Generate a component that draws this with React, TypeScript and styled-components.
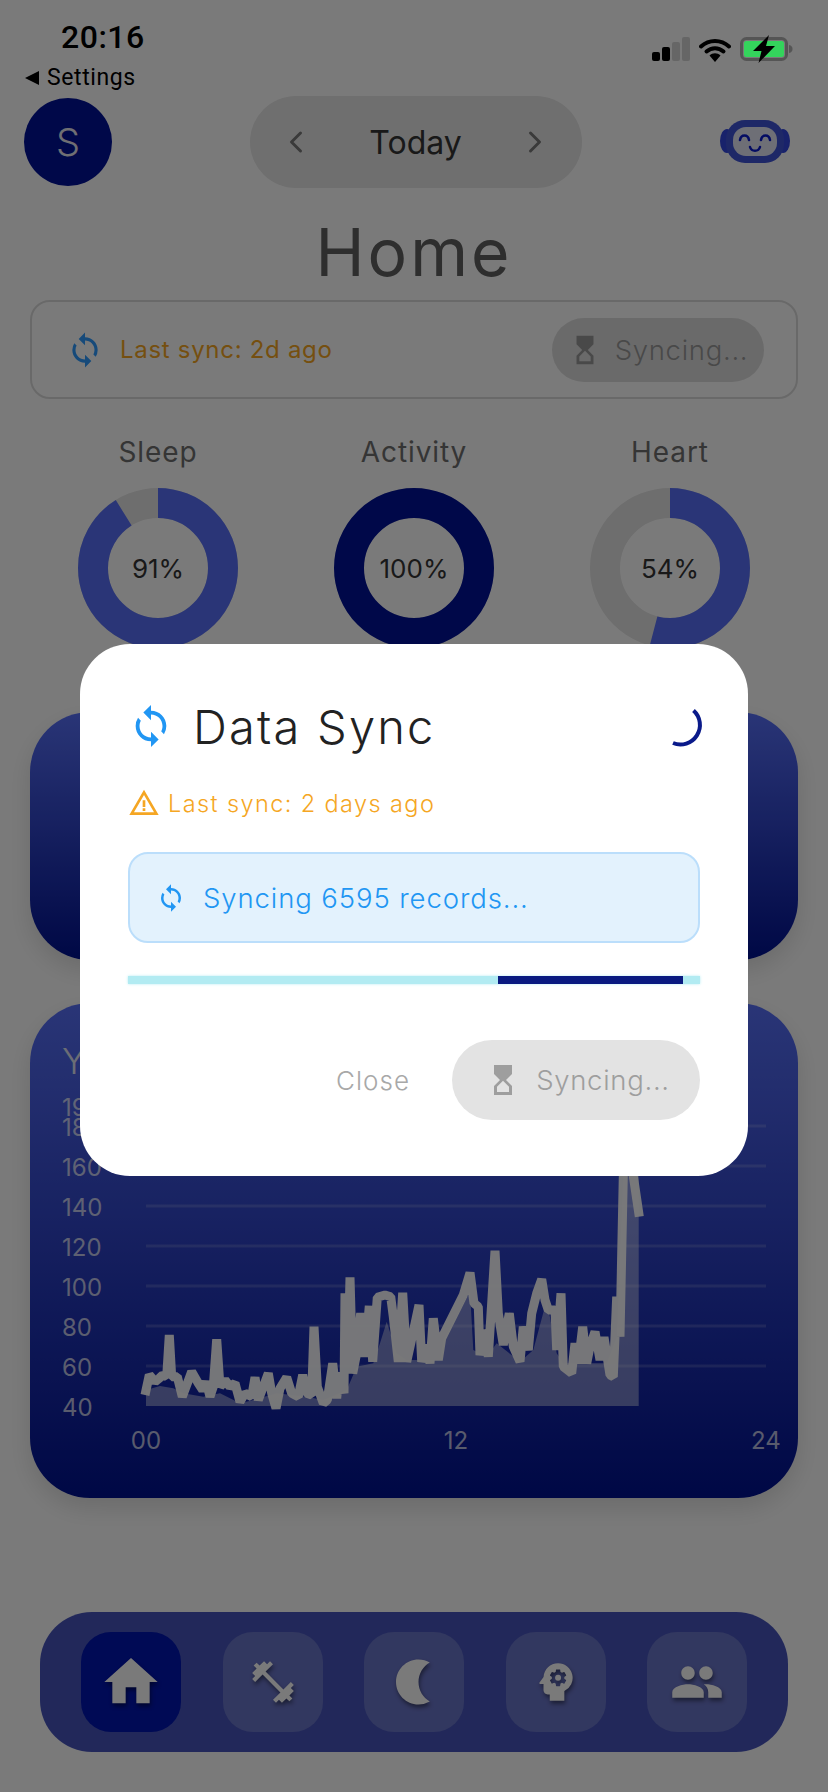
import React from 'react';
import styled, { createGlobalStyle } from 'styled-components';
import {
  MdFitnessCenter,
  MdGroup,
  MdHome,
  MdHourglassTop,
  MdNightlight,
  MdPsychology,
  MdSync,
  MdWarningAmber,
} from 'react-icons/md';
import { ChevronLeft, ChevronRight } from 'lucide-react';

const FONT = `Inter, "Open Sans", "Liberation Sans", sans-serif`;

const GlobalStyle = createGlobalStyle`
  html, body { margin: 0; padding: 0; background: #fff; }
  * { box-sizing: border-box; }
`;

const Screen = styled.div`
  position: relative;
  width: 828px;
  height: 1792px;
  overflow: hidden;
  background: #fff;
  font-family: ${FONT};
  font-weight: 300;
`;

/* status bar sits above the dim layer, its colours are not darkened */
const StatusBar = styled.div`
  position: relative;
  z-index: 3;
  height: 96px;
  padding: 19px 35px 0 25px;
  display: flex;
  justify-content: space-between;
  font-family: Roboto, "Liberation Sans", sans-serif;
  color: #000;
`;

const StatusLeft = styled.div`
  display: flex;
  flex-direction: column;
`;

const Clock = styled.div`
  font-size: 32px;
  line-height: 36px;
  font-weight: 500;
  padding-left: 36px;
  letter-spacing: 0.5px;
`;

const BackLink = styled.div`
  display: flex;
  align-items: center;
  gap: 8px;
  margin-top: 10px;
  font-size: 23px;
  line-height: 26px;
  font-weight: 400;
  letter-spacing: 0.6px;
`;

const BackArrow = styled.span`
  width: 0;
  height: 0;
  border-top: 7px solid transparent;
  border-bottom: 7px solid transparent;
  border-right: 14px solid #000;
`;

const StatusIcons = styled.div`
  display: flex;
  align-items: center;
  height: 26px;
  margin-top: 17px;
  gap: 9px;
`;

const HeaderRow = styled.div`
  display: flex;
  align-items: center;
  justify-content: space-between;
  height: 92px;
  padding: 0 37px 0 24px;
`;

const Avatar = styled.div`
  width: 88px;
  height: 88px;
  border-radius: 50%;
  background: #001198;
  color: #e8e8f0;
  display: flex;
  align-items: center;
  justify-content: center;
  font-size: 38px;
`;

const DatePill = styled.div`
  width: 332px;
  height: 92px;
  border-radius: 46px;
  background: #e8e8e8;
  display: flex;
  align-items: center;
  justify-content: space-between;
  padding: 0 28px;
  color: #7a7a7a;
  font-size: 32px;
  font-weight: 400;
`;

const DateLabel = styled.span`
  color: #363636;
`;

const PageTitle = styled.h1`
  margin: 26px 0 0;
  height: 86px;
  text-align: center;
  font-size: 66px;
  line-height: 76px;
  font-weight: 400;
  letter-spacing: 3px;
  color: #606060;
`;

const SyncBar = styled.div`
  margin: 0 30px;
  height: 99px;
  border: 2px solid #dcdcdc;
  border-radius: 20px;
  display: flex;
  align-items: center;
  justify-content: space-between;
  padding: 0 32px 0 34px;
`;

const SyncStatus = styled.div`
  display: flex;
  align-items: center;
  gap: 16px;
  color: #f5a623;
  font-size: 24px;
  letter-spacing: 0.7px;
  font-weight: 400;
`;

const SmallPill = styled.div`
  width: 212px;
  height: 64px;
  border-radius: 32px;
  background: #dedede;
  color: #9a9a9a;
  display: flex;
  align-items: center;
  justify-content: center;
  gap: 13px;
  font-size: 27.5px;
  letter-spacing: 0.7px;
`;

const RingRow = styled.div`
  display: flex;
  justify-content: space-between;
  padding: 0 78px;
  margin-top: 33px;
`;

const RingItem = styled.div`
  width: 160px;
  display: flex;
  flex-direction: column;
  align-items: center;
`;

const RingLabel = styled.div`
  height: 40px;
  line-height: 40px;
  font-size: 28px;
  font-weight: 400;
  letter-spacing: 0.9px;
  color: #707070;
  white-space: nowrap;
`;

const RingWrap = styled.div`
  position: relative;
  width: 160px;
  height: 160px;
  margin-top: 16px;
`;

const RingValue = styled.div`
  position: absolute;
  inset: 0;
  display: flex;
  align-items: center;
  justify-content: center;
  font-size: 26px;
  font-weight: 400;
  color: #363636;
`;

const GradientCard = styled.div<{ $height: number; $top: number }>`
  margin: ${(p) => p.$top}px 30px 0;
  height: ${(p) => p.$height}px;
  border-radius: 60px;
  background: linear-gradient(180deg, #5870f8 0%, #001190 100%);
  box-shadow: 0 10px 24px rgba(0, 0, 0, 0.12);
  overflow: hidden;
`;

const CardTitle = styled.div`
  padding: 38px 0 0 32px;
  height: 78px;
  font-size: 36px;
  line-height: 40px;
  color: #dfe3f5;
`;

const ChartSvg = styled.svg`
  display: block;
  margin-top: 9px;
  font-family: ${FONT};
  font-weight: 400;
`;

const NavBar = styled.div`
  margin: 114px 40px 0;
  height: 140px;
  border-radius: 52px;
  background: #4755bc;
  display: flex;
  align-items: center;
  justify-content: space-between;
  padding: 0 41px;
`;

const NavTile = styled.div<{ $active?: boolean }>`
  width: 100px;
  height: 100px;
  border-radius: 30px;
  background: ${(p) => (p.$active ? '#0015b1' : '#6a75c8')};
  color: #fff;
  display: flex;
  align-items: center;
  justify-content: center;
  svg {
    filter: drop-shadow(1px 3px 2px rgba(0, 0, 0, 0.45));
  }
`;

const Dim = styled.div`
  position: absolute;
  inset: 0;
  z-index: 2;
  background: rgba(0, 0, 0, 0.52);
  display: flex;
  justify-content: center;
  align-items: center;
  padding-top: 28px;
`;

const Modal = styled.div`
  width: 668px;
  height: 532px;
  border-radius: 50px;
  background: #fff;
  padding: 50px 48px 0;
`;

const ModalHeader = styled.div`
  display: flex;
  align-items: center;
  height: 64px;
  margin-right: -4px;
  color: #2196f3;
`;

const ModalTitle = styled.h2`
  flex: 1;
  margin: 0 0 0 19px;
  font-size: 47px;
  font-weight: 300;
  letter-spacing: 2.2px;
  color: #222;
`;

const LastSync = styled.div`
  display: flex;
  align-items: center;
  gap: 8px;
  margin-top: 28px;
  height: 34px;
  font-size: 23.5px;
  letter-spacing: 1.4px;
  color: #f5a623;
`;

const InfoBox = styled.div`
  display: flex;
  align-items: center;
  gap: 17px;
  margin-top: 32px;
  height: 91px;
  padding-left: 26px;
  border: 2px solid #bbdefb;
  border-radius: 20px;
  background: #e3f2fd;
  color: #2196f3;
  font-size: 27.5px;
  letter-spacing: 0.9px;
`;

const Track = styled.div`
  position: relative;
  margin-top: 33px;
  height: 8px;
  background: #b2ebf2;
  box-shadow: 0 0 3px #b2ebf2;
`;

const TrackFill = styled.div`
  position: absolute;
  top: 0;
  bottom: 0;
  background: #0a1a80;
`;

const ModalActions = styled.div`
  display: flex;
  align-items: center;
  justify-content: flex-end;
  gap: 42px;
  margin-top: 56px;
`;

const CloseLabel = styled.span`
  font-size: 26px;
  letter-spacing: 1px;
  color: #a8a8a8;
`;

const SyncingButton = styled.div`
  width: 248px;
  height: 80px;
  border-radius: 40px;
  background: #e3e3e3;
  color: #9e9e9e;
  display: flex;
  align-items: center;
  justify-content: center;
  gap: 15px;
  padding-left: 3px;
  font-size: 27.5px;
  letter-spacing: 0.7px;
`;

/* traced chart points, [x, y] in screen pixels of the card */
const toPoints = (raw: number[][], ox: number, oy: number) =>
  raw.map(([x, y]) => [ox + x / 3, oy + y / 3]);

const lineA = [[75,645],[88,585],[105,605],[118,595],[128,585],[140,590],[148,465],[155,590],[172,590],[187,650],[200,615],[215,575],[235,610],[248,630],[258,605],[270,650],[280,620],[290,478],[300,620],[315,600],[330,620],[345,610],[360,665],[375,640],[395,650],[405,592],[415,660],[430,620],[445,580],[455,640],[468,685],[480,625],[500,592],[515,640],[535,650],[548,585],[560,640],[575,645],[582,440],[592,620],[610,670],[622,660],[638,550],[650,655],[658,578],[672,640],[675,340],[683,580],[690,292],[698,580],[708,530],[722,400],[735,530],[748,378],[758,545],[772,352],[795,345],[812,350],[820,410],[835,545],[848,338],[860,545],[880,455],[897,375],[905,545],[920,495],[930,550],[940,415],[955,540],[965,475],[1030,345],[1050,278],[1062,370],[1075,380],[1080,525],[1095,450],[1105,530],[1125,212],[1135,400],[1150,495],[1168,400],[1180,500],[1200,545]];
const lineB = [[370,680],[385,750],[395,640],[410,580],[425,538],[435,600],[445,630],[465,630],[470,750],[483,580],[490,800],[515,820],[525,730],[535,790],[548,680],[560,790],[570,740],[585,695],[600,780],[612,712],[630,825],[640,830],[650,590],[660,710],[670,228],[672,120],[690,120],[700,228],[718,350]];
const areaA = [[78,630],[120,618],[160,625],[190,640],[250,650],[300,640],[360,670],[400,660],[470,640],[560,650],[610,660],[680,630],[710,560],[760,550],[780,490],[800,425],[830,520],[860,540],[960,540],[970,480],[1050,335],[1060,510],[1100,530],[1130,490],[1200,545]];
const areaB = [[400,750],[440,600],[470,760],[490,790],[620,790],[650,710],[670,228],[672,120],[716,120]];

const linePoints = [...toPoints(lineA, 120, 1180), ...toPoints(lineB, 400, 1100)];
const areaPoints = [
  [146, 1406],
  ...toPoints(areaA, 120, 1180),
  ...toPoints(areaB, 400, 1100),
  [638.7, 1406],
];
const asAttr = (pts: number[][]) => pts.map(([x, y]) => `${x.toFixed(1)},${y.toFixed(1)}`).join(' ');

const yTicks = [
  { label: '190', y: 1107 },
  { label: '180', y: 1127 },
  { label: '160', y: 1167 },
  { label: '140', y: 1207 },
  { label: '120', y: 1247 },
  { label: '100', y: 1287 },
  { label: '80', y: 1327 },
  { label: '60', y: 1367 },
  { label: '40', y: 1407 },
];

const rings = [
  { name: 'Sleep', value: 91, color: '#5870f8' },
  { name: 'Activity', value: 100, color: '#001198' },
  { name: 'Heart', value: 54, color: '#5870f8' },
];

const Ring: React.FC<{ value: number; color: string }> = ({ value, color }) => {
  const r = 65;
  const c = 2 * Math.PI * r;
  return (
    <svg width="160" height="160" viewBox="0 0 160 160">
      <circle cx="80" cy="80" r={r} fill="none" stroke="#e6e6e6" strokeWidth="30" />
      <circle
        cx="80"
        cy="80"
        r={r}
        fill="none"
        stroke={color}
        strokeWidth="30"
        strokeDasharray={`${(c * value) / 100} ${c}`}
        transform="rotate(-90 80 80)"
      />
    </svg>
  );
};

const SignalIcon = () => (
  <svg width="38" height="24" viewBox="0 0 38 24">
    <rect x="0" y="15" width="8" height="9" rx="2" fill="#000" />
    <rect x="10" y="10" width="8" height="14" rx="2" fill="#000" />
    <rect x="20" y="5" width="8" height="19" rx="2" fill="#666" />
    <rect x="30" y="0" width="8" height="24" rx="2" fill="#666" />
  </svg>
);

const WifiIcon = () => (
  <svg width="32" height="25" viewBox="0 0 32 25">
    <path d="M2 9.500C10 2 22 2 30 9.500" fill="none" stroke="#000" strokeWidth="4" strokeLinecap="round" />
    <path d="M7.500 14.500C12.500 10 19.500 10 24.500 14.500" fill="none" stroke="#000" strokeWidth="4" strokeLinecap="round" />
    <path d="M10.500 18.500L16 25L21.500 18.500C18.500 15.500 13.500 15.500 10.500 18.500Z" fill="#000" />
  </svg>
);

const BatteryIcon = () => (
  <svg width="53" height="28" viewBox="0 0 53 28">
    <rect x="1.500" y="3.500" width="45" height="21" rx="5" fill="none" stroke="#555" strokeWidth="3" />
    <rect x="4" y="6" width="40" height="16" rx="2.500" fill="#34d45c" />
    <path d="M49 10c2.500 .5 3.500 2 3.500 4s-1 3.500-3.500 4z" fill="#555" />
    <path d="M29 0L13 16h8.500l-3 12L35 11h-9z" fill="#000" />
  </svg>
);

const RobotIcon = () => (
  <svg width="72" height="46" viewBox="0 0 72 46">
    <ellipse cx="8" cy="22" rx="7" ry="12" fill="#3348e0" />
    <ellipse cx="64" cy="22" rx="7" ry="12" fill="#3348e0" />
    <rect x="7" y="1" width="58" height="43" rx="19" fill="#4054d8" />
    <rect x="14" y="8" width="44" height="29" rx="13" fill="#e6e9f6" />
    <path d="M21 21c1-6 8-6 9 0M42 21c1-6 8-6 9 0" fill="none" stroke="#0a1ad0" strokeWidth="2.500" strokeLinecap="round" />
    <path d="M31 28c1.500 5 8.500 5 10 0" fill="none" stroke="#0a1ad0" strokeWidth="2.500" strokeLinecap="round" />
  </svg>
);

const Spinner = () => (
  <svg width="44" height="44" viewBox="0 0 44 44">
    <path d="M33.500 6.500A19.500 19.500 0 0 1 13 39" fill="none" stroke="#0a1a8a" strokeWidth="4" />
  </svg>
);

const App: React.FC = () => {
  return (
    <Screen>
      <GlobalStyle />
      <StatusBar>
        <StatusLeft>
          <Clock>20:16</Clock>
          <BackLink>
            <BackArrow />
            Settings
          </BackLink>
        </StatusLeft>
        <StatusIcons>
          <SignalIcon />
          <WifiIcon />
          <BatteryIcon />
        </StatusIcons>
      </StatusBar>

      <HeaderRow>
        <Avatar>S</Avatar>
        <DatePill>
          <ChevronLeft size={36} strokeWidth={2} />
          <DateLabel>Today</DateLabel>
          <ChevronRight size={36} strokeWidth={2} />
        </DatePill>
        <RobotIcon />
      </HeaderRow>

      <PageTitle>Home</PageTitle>

      <SyncBar>
        <SyncStatus>
          <MdSync size={38} color="#2f9bff" />
          Last sync: 2d ago
        </SyncStatus>
        <SmallPill>
          <MdHourglassTop size={34} />
          Syncing...
        </SmallPill>
      </SyncBar>

      <RingRow>
        {rings.map((ring) => (
          <RingItem key={ring.name}>
            <RingLabel>{ring.name}</RingLabel>
            <RingWrap>
              <Ring value={ring.value} color={ring.color} />
              <RingValue>{ring.value}%</RingValue>
            </RingWrap>
          </RingItem>
        ))}
      </RingRow>

      <GradientCard $top={64} $height={248} />

      <GradientCard $top={43} $height={495}>
        <CardTitle>Your Heart Rate</CardTitle>
        <ChartSvg width="768" height="408" viewBox="30 1090 768 408">
          {yTicks.slice(1, 8).map((tick) => (
            <line key={tick.label} x1="146" x2="766" y1={tick.y - 1} y2={tick.y - 1} stroke="#fff" strokeOpacity="0.16" strokeWidth="3" />
          ))}
          <polygon points={asAttr(areaPoints)} fill="#fff" fillOpacity="0.42" />
          <polyline points={asAttr(linePoints)} fill="none" stroke="#fff" strokeWidth="9" strokeOpacity="0.96" strokeLinejoin="bevel" />
          {yTicks.map((tick) => (
            <text key={tick.label} x="62" y={tick.y + 9} fontSize="24" fill="#fff" fillOpacity="0.72">
              {tick.label}
            </text>
          ))}
          {[['00', 146], ['12', 456], ['24', 766]].map(([label, x]) => (
            <text key={label} x={x} y="1449" fontSize="24" textAnchor="middle" fill="#fff" fillOpacity="0.72">
              {label}
            </text>
          ))}
        </ChartSvg>
      </GradientCard>

      <NavBar>
        <NavTile $active>
          <MdHome size={64} />
        </NavTile>
        <NavTile>
          <MdFitnessCenter size={50} />
        </NavTile>
        <NavTile>
          <MdNightlight size={54} />
        </NavTile>
        <NavTile>
          <MdPsychology size={50} />
        </NavTile>
        <NavTile>
          <MdGroup size={54} />
        </NavTile>
      </NavBar>

      <Dim>
        <Modal>
          <ModalHeader>
            <MdSync size={46} />
            <ModalTitle>Data Sync</ModalTitle>
            <Spinner />
          </ModalHeader>
          <LastSync>
            <MdWarningAmber size={32} />
            Last sync: 2 days ago
          </LastSync>
          <InfoBox>
            <MdSync size={30} />
            Syncing 6595 records...
          </InfoBox>
          <Track>
            <TrackFill style={{ left: '64.7%', width: '32.3%' }} />
          </Track>
          <ModalActions>
            <CloseLabel>Close</CloseLabel>
            <SyncingButton>
              <MdHourglassTop size={36} />
              Syncing...
            </SyncingButton>
          </ModalActions>
        </Modal>
      </Dim>
    </Screen>
  );
};

export default App;
